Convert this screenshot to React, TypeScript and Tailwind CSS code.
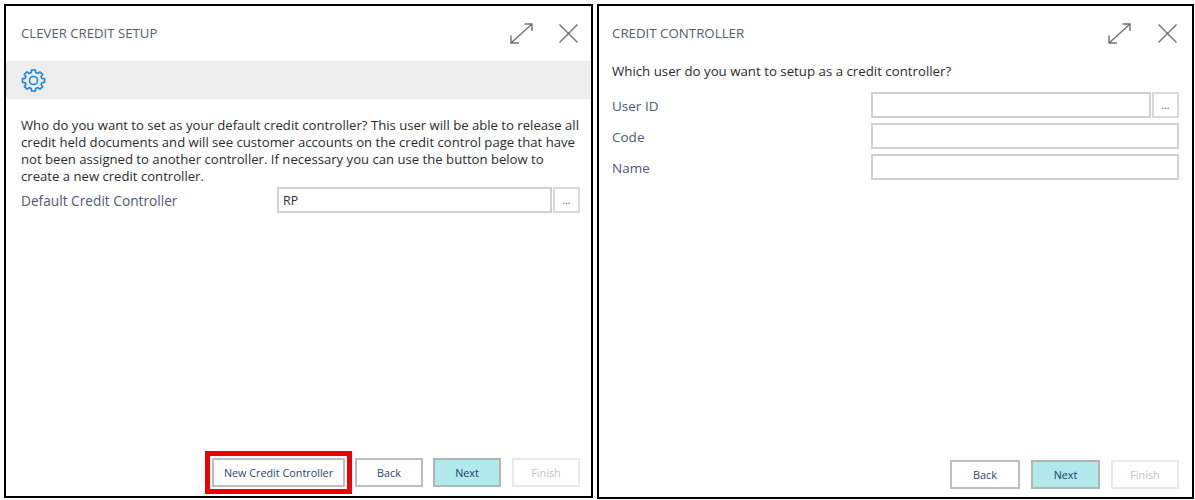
import React from "react";

const font = { fontFamily: '"Open Sans", "Noto Sans", sans-serif' };

function Expand() {
  return (
    <svg width="23" height="21" viewBox="0 0 23 21" fill="none" stroke="#707070" strokeWidth="1.4">
      <path d="M1 20 L22 1 M14.5 1 H22 V8 M1 12.5 V20 H9" />
    </svg>
  );
}

function Close() {
  return (
    <svg width="19" height="19" viewBox="0 0 19 19" fill="none" stroke="#707070" strokeWidth="1.4">
      <path d="M0.5 0.5 L18.5 18.5 M18.5 0.5 L0.5 18.5" />
    </svg>
  );
}

const gearPath = (() => {
  const cx = 12.5;
  const cy = 11.5;
  const pts: string[] = [];
  for (let i = 0; i < 8; i++) {
    const a = (i * Math.PI) / 4 - Math.PI / 2;
    const d = Math.PI / 180;
    const p = (r: number, o: number) =>
      `${(cx + r * 1.06 * Math.cos(a + o * d)).toFixed(2)} ${(cy + r * Math.sin(a + o * d)).toFixed(2)}`;
    pts.push(p(8.2, -15), p(10.6, -10), p(10.6, 10), p(8.2, 15));
  }
  return `M${pts.join(" L")} Z`;
})();

function Gear() {
  return (
    <svg width="25" height="23" viewBox="0 0 25 23" fill="none" stroke="#1f84dc" strokeWidth="1.6" strokeLinejoin="round">
      <path d={gearPath} />
      <circle cx="12.5" cy="11.5" r="4" />
    </svg>
  );
}

function Btn({ label, kind, w }: { label: string; kind?: "primary" | "disabled"; w: string }) {
  const tone =
    kind === "primary"
      ? "bg-[#b1e9ed] border-[#b4b4b4] text-[#1f3b66]"
      : kind === "disabled"
      ? "bg-white border-[#e8e8e8] text-[#c2c2c2]"
      : "bg-white border-[#bdbdbd] text-[#2c4570]";
  return <div className={`${w} h-[29px] border-2 flex items-center justify-center pt-[1px] text-[10.8px] ${tone}`}>{label}</div>;
}

function Dots() {
  return (
    <div className="w-[27px] h-[26px] border-2 border-[#d8d8d8] flex items-center justify-center text-[10px] text-[#555] bg-white">
      ...
    </div>
  );
}

function Header({ title, gap, pr, size }: { title: string; gap: string; pr: string; size: string }) {
  return (
    <div className={`h-[55px] flex items-center justify-between ${pr}`}>
      <div className={`${size} text-[#505c6e] pt-[1px]`}>{title}</div>
      <div className={`flex items-center ${gap}`}>
        <Expand />
        <Close />
      </div>
    </div>
  );
}

export default function App() {
  return (
    <div className="w-[1195px] h-[500px] bg-white flex gap-[4px] pl-[4px] pt-[4px] overflow-hidden" style={font}>
      <div className="w-[589px] h-[494px] border-2 border-black flex flex-col">
        <Header title="CLEVER CREDIT SETUP" gap="gap-[26px]" pr="pl-[15px] pr-[13px]" size="text-[13.2px]" />
        <div className="h-[38px] bg-[#ededed] flex items-center pl-[15px]">
          <Gear />
        </div>
        <div className="px-[15px] pt-[18px] text-[13.14px] leading-[17px] text-[#2b2b2b]">
          <p className="whitespace-nowrap">Who do you want to set as your default credit controller? This user will be able to release all</p>
          <p className="whitespace-nowrap">credit held documents and will see customer accounts on the credit control page that have</p>
          <p className="whitespace-nowrap">not been assigned to another controller. If necessary you can use the button below to</p>
          <p className="whitespace-nowrap">create a new credit controller.</p>
        </div>
        <div className="flex items-center pl-[15px] pr-[11px] mt-[2px]">
          <div className="w-[256px] text-[13.7px] text-[#4d5a70] pt-[2px]">Default Credit Controller</div>
          <div className="w-[275px] h-[26px] border-2 border-[#d0d0d0] flex items-center pl-[4px] pt-[2px] text-[12.5px] text-[#333] mr-[1px]">RP</div>
          <Dots />
        </div>
        <div className="mt-auto flex items-center justify-end gap-[3px] pr-[11px] pb-[2px]">
          <div className="border-[5px] border-[#f00000] p-[2px]">
            <Btn label="New Credit Controller" w="w-[133px]" />
          </div>
          <div className="flex gap-[10px]">
            <Btn label="Back" w="w-[68px]" />
            <div className="flex gap-[11px]">
              <Btn label="Next" kind="primary" w="w-[68px]" />
              <Btn label="Finish" kind="disabled" w="w-[68px]" />
            </div>
          </div>
        </div>
      </div>
      <div className="w-[597px] h-[495px] border-2 border-black flex flex-col">
        <Header title="CREDIT CONTROLLER" gap="gap-[27px]" pr="pl-[13px] pr-[15px]" size="text-[13.3px]" />
        <div className="pl-[13px] pt-[2px] text-[13.28px] leading-[17px] text-[#2b2b2b]">Which user do you want to setup as a credit controller?</div>
        <div className="flex flex-col gap-[5px] mt-[12px] pl-[13px] pr-[13px] text-[13.5px] text-[#4d5a70]">
          <div className="flex items-center">
            <div className="w-[259px] pt-[2px]">User ID</div>
            <div className="w-[281px] h-[26px] border-2 border-[#d0d0d0] mr-[1px]" />
            <Dots />
          </div>
          <div className="flex items-center">
            <div className="w-[259px] pt-[2px]">Code</div>
            <div className="flex-1 h-[26px] border-2 border-[#d0d0d0]" />
          </div>
          <div className="flex items-center">
            <div className="w-[259px] pt-[2px]">Name</div>
            <div className="flex-1 h-[26px] border-2 border-[#d0d0d0]" />
          </div>
        </div>
        <div className="mt-auto flex justify-end gap-[11px] pr-[13px] pb-[8px]">
          <Btn label="Back" w="w-[70px]" />
          <Btn label="Next" kind="primary" w="w-[69px]" />
          <Btn label="Finish" kind="disabled" w="w-[68px]" />
        </div>
      </div>
    </div>
  );
}
